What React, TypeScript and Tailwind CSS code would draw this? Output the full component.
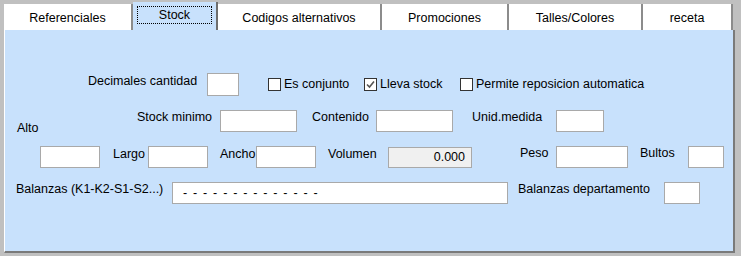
import type { ReactNode } from 'react';

const tabs = [
  { label: 'Referenciales', cls: 'w-[129px]' },
  { label: 'Stock', cls: 'w-[85px]', active: true },
  { label: 'Codigos alternativos', cls: 'w-[164px]' },
  { label: 'Promociones', cls: 'w-[127px]' },
  { label: 'Talles/Colores', cls: 'w-[134px]' },
  { label: 'receta', cls: 'w-[90px]' },
];

function Box({ className = '', children }: { className?: string; children?: ReactNode }) {
  return <div className={`shrink-0 bg-white border border-[#a9a9a9] ${className}`}>{children}</div>;
}

function Label({ className = '', children }: { className?: string; children: ReactNode }) {
  return <div className={`shrink-0 leading-[15px] whitespace-nowrap ${className}`}>{children}</div>;
}

function Check({ checked, label, className = '' }: { checked?: boolean; label: string; className?: string }) {
  return (
    <div className={`shrink-0 flex items-center ${className}`}>
      <div className="w-[13px] h-[13px] bg-white border border-[#333333] flex items-center justify-center">
        {checked && (
          <svg width="11" height="11" viewBox="0 0 11 11">
            <polyline points="2,5.5 4.5,8 9,2.5" fill="none" stroke="#555555" strokeWidth="1.6" />
          </svg>
        )}
      </div>
      <span className="ml-[3px] leading-[15px] whitespace-nowrap">{label}</span>
    </div>
  );
}

export default function App() {
  return (
    <div className="w-[741px] h-[256px] bg-[#c0c0c0] pt-[2px] pl-[4px] font-['Liberation_Sans',Arial,sans-serif] text-[12.5px] text-black overflow-hidden">
      <div className="w-[731px] flex flex-col">
        {/* Tabs */}
        <div className="flex items-end h-[28px]">
          {tabs.map((t) =>
            t.active ? (
              <div key={t.label} className={`${t.cls} h-[28px] bg-[#c8e1fc] border-r-2 border-[#6e6e6e] pt-[4px] px-[4px]`}>
                <div className="h-[18px] border border-dotted border-black flex items-center justify-center leading-[15px]">
                  {t.label}
                </div>
              </div>
            ) : (
              <div
                key={t.label}
                className={`${t.cls} h-[26px] bg-white border-r-2 border-[#8c8c8c] flex items-center justify-center pt-[2px] leading-[15px]`}
              >
                {t.label}
              </div>
            )
          )}
        </div>

        {/* Panel */}
        <div className="h-[223px] bg-[#c8e1fc] border-l border-white border-r-2 border-r-[#7a7a7a] border-b-2 border-b-[#7a7a7a] pt-[43px]">
          {/* Row 1 */}
          <div className="flex items-start h-[23px]">
            <Label className="ml-[83px] w-[119px] mt-[1px]">Decimales cantidad</Label>
            <Box className="w-[32px] h-[23px]" />
            <Check className="ml-[29px] w-[96px] mt-[4px]" label="Es conjunto" />
            <Check className="w-[96px] mt-[4px]" checked label="Lleva stock" />
            <Check className="mt-[4px]" label="Permite reposicion automatica" />
          </div>

          {/* Row 2 */}
          <div className="flex items-start h-[22px] mt-[14px]">
            <Label className="ml-[12px] w-[120px] mt-[11px]">Alto</Label>
            <Label className="w-[83px] mt-[0px]">Stock minimo</Label>
            <Box className="w-[77px] h-[22px]" />
            <Label className="ml-[15px] w-[64px]">Contenido</Label>
            <Box className="w-[77px] h-[22px]" />
            <Label className="ml-[19px] w-[84px]">Unid.medida</Label>
            <Box className="w-[48px] h-[22px]" />
          </div>

          {/* Row 3 */}
          <div className="flex items-start h-[22px] mt-[14px]">
            <Box className="ml-[35px] w-[60px] h-[22px]" />
            <Label className="ml-[13px] w-[35px] mt-[1px]">Largo</Label>
            <Box className="w-[60px] h-[22px]" />
            <Label className="ml-[12px] w-[36px] mt-[1px]">Ancho</Label>
            <Box className="w-[60px] h-[22px]" />
            <Label className="ml-[12px] w-[60px] mt-[1px]">Volumen</Label>
            <div className="shrink-0 w-[84px] h-[21px] mt-[1px] bg-[#f0f0f0] border border-[#a9a9a9] flex items-center justify-end pr-[6px] leading-[15px]">
              0.000
            </div>
            <Label className="ml-[48px] w-[36px]">Peso</Label>
            <Box className="w-[72px] h-[22px]" />
            <Label className="ml-[12px] w-[48px]">Bultos</Label>
            <Box className="w-[36px] h-[22px]" />
          </div>

          {/* Row 4 */}
          <div className="flex items-start h-[22px] mt-[14px]">
            <Label className="ml-[11px] w-[156px]">Balanzas (K1-K2-S1-S2...)</Label>
            <Box className="w-[336px] h-[22px] flex items-center pl-[10px]">
              <span className="leading-[15px] tracking-[1.2px]">- - - - - - - - - - - - - -</span>
            </Box>
            <Label className="ml-[10px] w-[146px]">Balanzas departamento</Label>
            <Box className="w-[36px] h-[22px]" />
          </div>
        </div>
      </div>
    </div>
  );
}
